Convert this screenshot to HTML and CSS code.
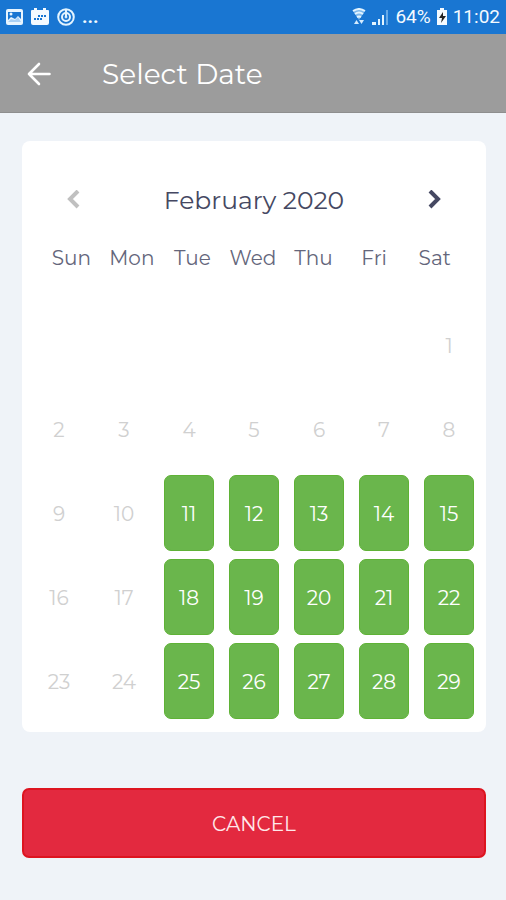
FILE: index.html
```html
<!DOCTYPE html>
<html lang="en">
<head>
<meta charset="utf-8">
<meta name="viewport" content="width=device-width, initial-scale=1">
<title>Select Date</title>
<link rel="stylesheet" href="styles.css">
</head>
<body>
<div class="status">
  <div class="status-group">
    <svg width="18" height="18" viewBox="0 0 18 18" aria-hidden="true"><rect x="1" y="1" width="17" height="16" rx="2" fill="#e8f5ff"/><path d="M3 4h13v7l-3-3-3 3-4-2-3 3z" fill="#1976d2"/><circle cx="6" cy="6" r="1.500" fill="#e8f5ff"/><path d="M3 14l3-3 4 1 3-3 3 5z" fill="#a9d0f4"/></svg>
    <svg width="20" height="18" viewBox="0 0 20 18" aria-hidden="true"><path d="M2 2h2V0h3v2h6V0h3v2h2q1 0 1 1v12q0 2-2 2H3q-2 0-2-2V3q0-1 1-1z" fill="#f4faff"/><path d="M8 8h2M11 8h2M14 8h2M4 11h2M7 11h2M10 11h2" stroke="#1976d2" stroke-width="2"/></svg>
    <svg width="18" height="18" viewBox="0 0 18 18" fill="none" stroke="#e3f4ff" aria-hidden="true"><circle cx="9" cy="9" r="7.8" stroke-width="2"/><circle cx="9" cy="9" r="4" stroke-width="2"/><path d="M9 2v7" stroke-width="2"/><circle cx="9" cy="9" r="1" fill="#e3f4ff"/></svg>
    <span class="more">...</span>
  </div>
  <div class="status-group status-right">
    <svg width="14" height="18" viewBox="0 0 14 18" aria-hidden="true"><path d="M1 3q6-4 12 0L7 12z" fill="#7db8ec"/><path d="M1 3q6-4 12 0M3 6q4-3 8 0M5 9q2-1 4 0" fill="none" stroke="#e3f4ff" stroke-width="2"/><path d="M2 16l2.500-4L7 16zM7 12h5l-2.500 4z" fill="#d5ecff"/></svg>
    <svg width="19" height="18" viewBox="0 0 19 18" aria-hidden="true"><path d="M1 14h4v3H1zM7 11h2v6H7zM11 7h2v10h-2z" fill="#e3f4ff"/><path d="M15 2h2v15h-2z" fill="#66a9e7"/></svg>
    <span>64%</span>
    <svg width="12" height="18" viewBox="0 0 12 18" aria-hidden="true"><path d="M4 0h4v2h3v15H1V2h3z" fill="#f4faff"/><path d="M7 4L3 10h3l-1 5 5-7H7z" fill="#222"/></svg>
    <span class="clock">11:02</span>
  </div>
</div>
<header class="bar">
  <button class="icon-button" type="button" aria-label="Back"><svg width="24" height="24" viewBox="0 0 24 24" fill="none" stroke="#fff" stroke-width="2.6" stroke-linecap="round" stroke-linejoin="round"><path d="M22.500 12H2M12 2L2 12L12 22"/></svg></button>
  <h1>Select Date</h1>
</header>
<main>
  <section class="card">
    <div class="month">
      <button class="icon-button prev" type="button" aria-label="Previous month" disabled><svg width="14" height="20" viewBox="0 0 14 20"><path d="M12 1L4 9L12 17"/></svg></button>
      <h2 id="month">February 2020</h2>
      <button class="icon-button next" type="button" aria-label="Next month"><svg width="14" height="20" viewBox="0 0 14 20"><path d="M2 1L10 9L2 17"/></svg></button>
    </div>
    <table aria-labelledby="month">
      <thead><tr><th>Sun</th><th>Mon</th><th>Tue</th><th>Wed</th><th>Thu</th><th>Fri</th><th>Sat</th></tr></thead>
      <tbody>
        <tr><td></td><td></td><td></td><td></td><td></td><td></td><td><button type="button" disabled>1</button></td></tr>
        <tr><td><button type="button" disabled>2</button></td><td><button type="button" disabled>3</button></td><td><button type="button" disabled>4</button></td><td><button type="button" disabled>5</button></td><td><button type="button" disabled>6</button></td><td><button type="button" disabled>7</button></td><td><button type="button" disabled>8</button></td></tr>
        <tr><td><button type="button" disabled>9</button></td><td><button type="button" disabled>10</button></td><td><button type="button">11</button></td><td><button type="button">12</button></td><td><button type="button">13</button></td><td><button type="button">14</button></td><td><button type="button">15</button></td></tr>
        <tr><td><button type="button" disabled>16</button></td><td><button type="button" disabled>17</button></td><td><button type="button">18</button></td><td><button type="button">19</button></td><td><button type="button">20</button></td><td><button type="button">21</button></td><td><button type="button">22</button></td></tr>
        <tr><td><button type="button" disabled>23</button></td><td><button type="button" disabled>24</button></td><td><button type="button">25</button></td><td><button type="button">26</button></td><td><button type="button">27</button></td><td><button type="button">28</button></td><td><button type="button">29</button></td></tr>
      </tbody>
    </table>
  </section>
  <button class="cancel" type="button">CANCEL</button>
</main>
</body>
</html>
```
FILE: styles.css
```css
* { box-sizing: border-box; }
body {
  margin: 0;
  min-height: 100vh;
  background: #eff3f8;
  color: #454862;
  font-family: Montserrat, Inter, sans-serif;
}
button { font: inherit; border: 0; padding: 0; }
h1, h2 { margin: 0; font-weight: 400; }
svg { display: block; }
.status {
  display: flex;
  justify-content: space-between;
  align-items: center;
  height: 34px;
  padding: 0 6px 0 5px;
  background: #1976d2;
  color: #f4faff;
  font: 19px/24px Roboto, sans-serif;
}
.status-group { display: flex; align-items: center; gap: 7px; }
.status-right { gap: 5px; }
.more { font-weight: 700; }
.bar {
  display: flex;
  align-items: center;
  gap: 51px;
  height: 79px;
  padding: 2px 27px 0;
  background: #9c9c9c;
  border-bottom: 1px solid #8e8e8e;
  color: #fff;
}
.bar h1 { font-size: 28px; line-height: 36px; }
.icon-button { background: none; }
main { padding: 28px 20px 42px 22px; }
.card {
  padding: 41px 12px 13px;
  border-radius: 8px;
  background: #fff;
}
.month {
  display: flex;
  justify-content: space-between;
  align-items: center;
  height: 36px;
  padding: 0 32px;
}
.month h2 { font-size: 25px; line-height: 36px; }
.month path { fill: none; stroke-width: 4; }
.prev path { stroke: #c0c0c0; }
.next path { stroke: #454862; }
table, thead, tbody { display: block; }
thead { padding: 27px 9px 36px 7px; }
tr { display: grid; grid-template-columns: repeat(7, 1fr); }
th, td { padding: 0; }
th {
  color: #64667b;
  font-size: 20px;
  font-weight: 400;
  line-height: 26px;
}
tbody { display: grid; gap: 8px; }
tbody tr { column-gap: 15px; }
td { height: 76px; }
td button {
  width: 100%;
  height: 100%;
  padding-top: 1px;
  border: 1px solid #5fb236;
  border-radius: 7px;
  background: #6ab64c;
  color: #fff;
  font-size: 20px;
}
td button:disabled {
  border-color: transparent;
  background: none;
  color: #d0d0d0;
  font-weight: 400;
}
.cancel {
  display: block;
  width: 100%;
  height: 70px;
  margin-top: 56px;
  padding-top: 2px;
  border: 2px solid #dd1420;
  border-radius: 7px;
  background: #e3293f;
  color: #ffe8ea;
  font-size: 20px;
}
```
